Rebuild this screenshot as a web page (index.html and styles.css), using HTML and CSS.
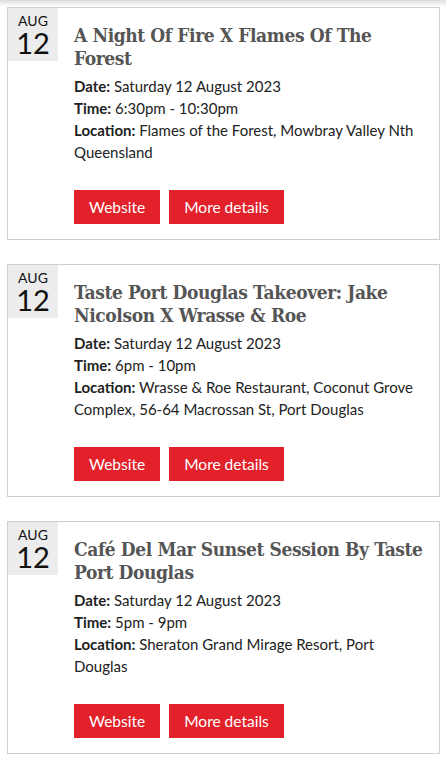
FILE: index.html
```html
<!DOCTYPE html>
<html lang="en">
<head>
    <meta charset="UTF-8">
    <meta name="viewport" content="width=device-width, initial-scale=1.0">
    <title>Events - August</title>
    <link rel="stylesheet" href="styles.css">
</head>
<body>
    <div class="top-shade"></div>

    <div class="event-list">
        <!-- Event 1 -->
        <div class="event">
            <div class="event-date">
                <span class="month">AUG</span>
                <span class="day">12</span>
            </div>
            <div class="event-body">
                <h3 class="event-title">A Night Of Fire X Flames Of The Forest</h3>
                <div class="event-meta">
                    <div><strong>Date:</strong> Saturday 12 August 2023</div>
                    <div><strong>Time:</strong> 6:30pm - 10:30pm</div>
                    <div><strong>Location:</strong> Flames of the Forest, Mowbray Valley Nth Queensland</div>
                </div>
                <div class="event-buttons">
                    <a class="btn" href="#">Website</a>
                    <a class="btn" href="#">More details</a>
                </div>
            </div>
        </div>

        <!-- Event 2 -->
        <div class="event">
            <div class="event-date">
                <span class="month">AUG</span>
                <span class="day">12</span>
            </div>
            <div class="event-body">
                <h3 class="event-title">Taste Port Douglas Takeover: Jake Nicolson X Wrasse &amp; Roe</h3>
                <div class="event-meta">
                    <div><strong>Date:</strong> Saturday 12 August 2023</div>
                    <div><strong>Time:</strong> 6pm - 10pm</div>
                    <div><strong>Location:</strong> Wrasse &amp; Roe Restaurant, Coconut Grove Complex, 56-64 Macrossan St, Port Douglas</div>
                </div>
                <div class="event-buttons">
                    <a class="btn" href="#">Website</a>
                    <a class="btn" href="#">More details</a>
                </div>
            </div>
        </div>

        <!-- Event 3 -->
        <div class="event">
            <div class="event-date">
                <span class="month">AUG</span>
                <span class="day">12</span>
            </div>
            <div class="event-body">
                <h3 class="event-title">Café Del Mar Sunset Session By Taste Port Douglas</h3>
                <div class="event-meta">
                    <div><strong>Date:</strong> Saturday 12 August 2023</div>
                    <div><strong>Time:</strong> 5pm - 9pm</div>
                    <div><strong>Location:</strong> Sheraton Grand Mirage Resort, Port Douglas</div>
                </div>
                <div class="event-buttons">
                    <a class="btn" href="#">Website</a>
                    <a class="btn" href="#">More details</a>
                </div>
            </div>
        </div>
    </div>
</body>
</html>
```

FILE: styles.css
```css
* {
    margin: 0;
    padding: 0;
    box-sizing: border-box;
}

body {
    background: #fff;
    font-family: Lato, 'Liberation Sans', Arial, sans-serif;
    color: #222;
    font-size: 15px;
    line-height: 22px;
}

.top-shade {
    height: 7px;
    background: linear-gradient(180deg, #dcdcdc 0%, #f6f6f6 70%, #fff 100%);
}

.event-list {
    padding: 0 6px 0 7px;
    display: flex;
    flex-direction: column;
    gap: 24px;
}

.event {
    display: flex;
    border: 1px solid #cfcfcf;
    padding-bottom: 15px;
}

.event-date {
    flex: 0 0 50px;
    height: 53px;
    background: #ececec;
    display: flex;
    flex-direction: column;
    align-items: center;
    color: #111;
    padding-top: 5px;
}

.event-date .month {
    font-size: 14px;
    line-height: 16px;
}

.event-date .day {
    font-size: 29px;
    line-height: 27px;
}

.event-body {
    flex: 1;
    padding: 16px 9px 0 16px;
}

.event-title {
    font-family: 'DejaVu Serif Condensed', 'DejaVu Serif', serif;
    font-stretch: condensed;
    font-weight: bold;
    font-size: 19px;
    line-height: 23px;
    letter-spacing: -0.4px;
    color: #555;
    margin-bottom: 5px;
}

.event-buttons {
    display: flex;
    gap: 9px;
    margin-top: 27px;
}

.btn {
    display: inline-block;
    background: #e2212a;
    color: #fff;
    text-decoration: none;
    font-size: 15.5px;
    line-height: 34px;
    height: 34px;
    padding: 0 15px;
}
```
